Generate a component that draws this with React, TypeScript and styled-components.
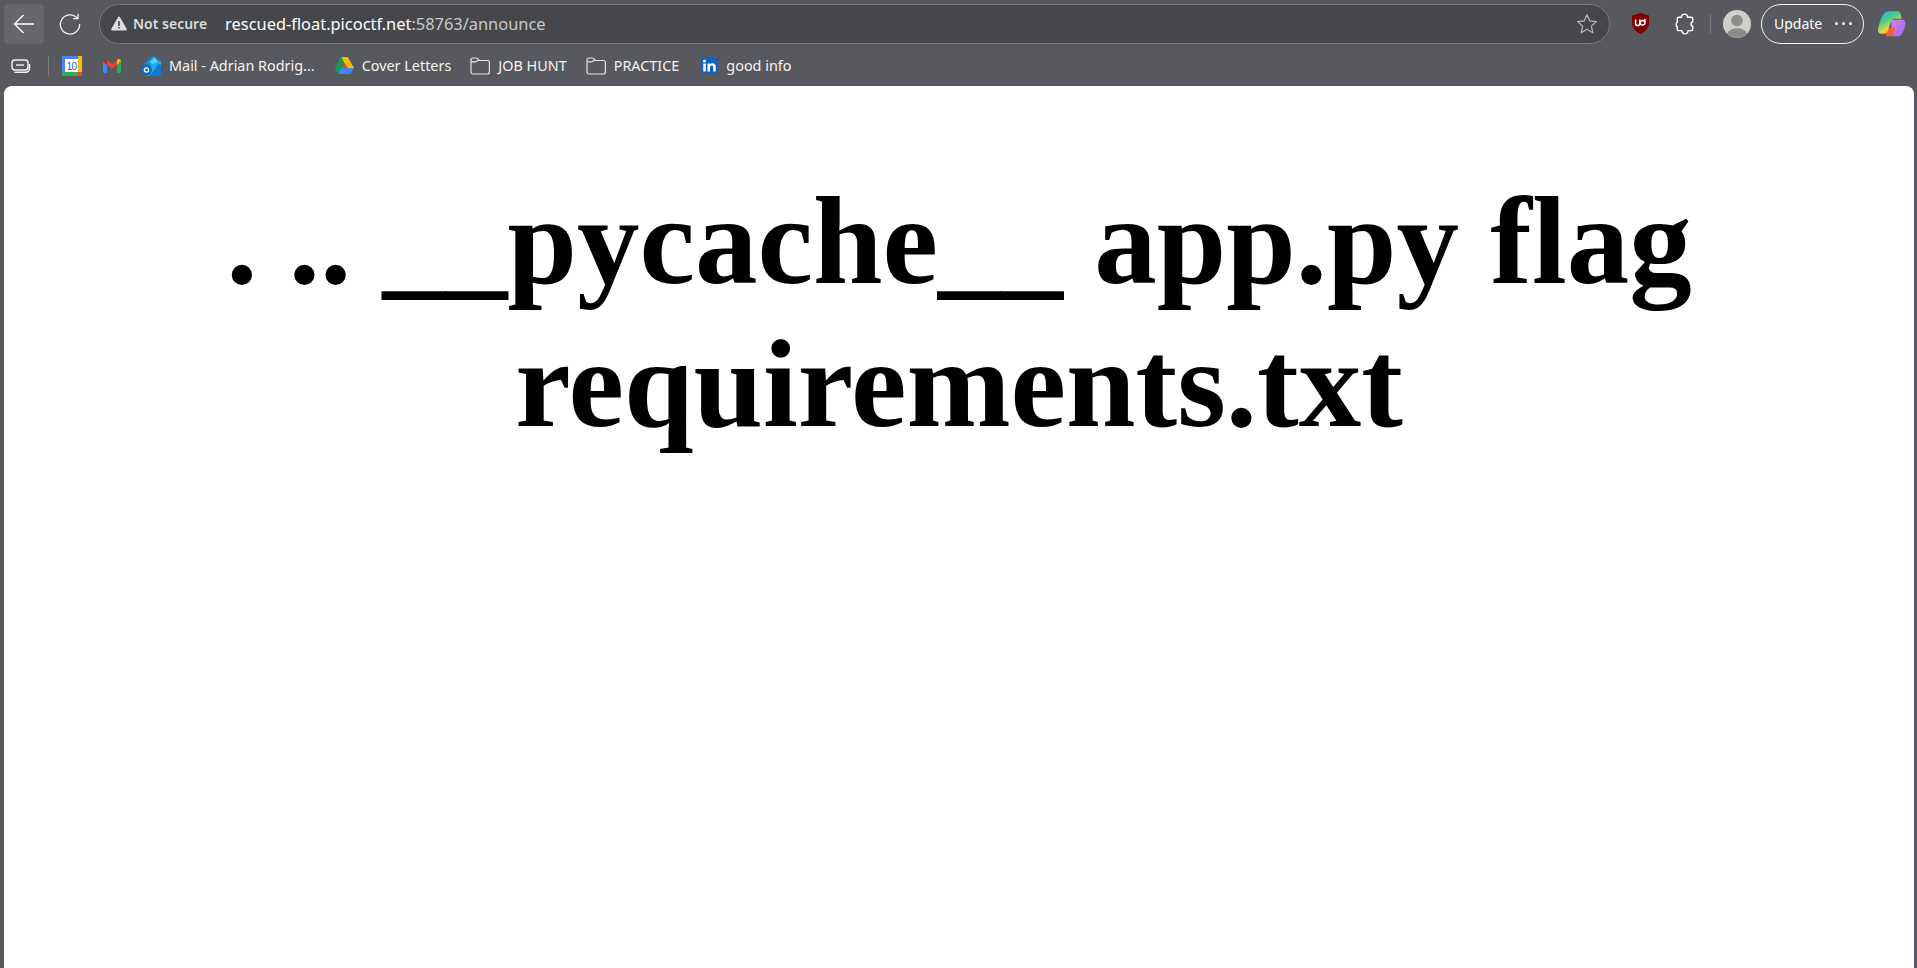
import React from "react";
import styled, { createGlobalStyle } from "styled-components";

const GlobalStyle = createGlobalStyle`
  html, body {
    margin: 0;
    height: 100%;
    background: #58595e;
    overflow: hidden;
  }
  #root {
    height: 100%;
  }
`;

const Browser = styled.div`
  display: flex;
  flex-direction: column;
  height: 968px;
  background: #58595e;
  color: #fff;
  font-family: "Noto Sans", "Open Sans", sans-serif;
`;

const Toolbar = styled.div`
  display: flex;
  align-items: center;
  height: 47px;
  padding: 0 8px 0 4px;
  box-sizing: border-box;
`;

const BackButton = styled.div`
  display: flex;
  align-items: center;
  justify-content: center;
  width: 40px;
  height: 40px;
  border-radius: 5px;
  background: #66676b;
`;

const ReloadButton = styled.div`
  display: flex;
  align-items: center;
  justify-content: center;
  width: 32px;
  height: 40px;
  margin: 0 13px 0 10px;
`;

const Omnibox = styled.div`
  flex: none;
  display: flex;
  align-items: center;
  width: 1511px;
  height: 40px;
  box-sizing: border-box;
  padding: 0 11px 0 11px;
  border: 1px solid #77787c;
  border-radius: 20px;
  background: #46474b;
`;

const SecurityChip = styled.span`
  display: flex;
  align-items: center;
  gap: 6px;
  font-size: 14px;
  font-weight: 600;
  color: #dcdcdd;
  margin-right: 18px;
`;

const Url = styled.span`
  flex: 1;
  font-size: 16.4px;
  color: #c9c9cb;
  b {
    font-weight: 400;
    color: #fff;
  }
`;

const ToolIcon = styled.div<{ $left: number; $size?: number }>`
  flex: none;
  display: flex;
  align-items: center;
  justify-content: center;
  width: ${({ $size }) => $size ?? 24}px;
  height: ${({ $size }) => $size ?? 24}px;
  margin-left: ${({ $left }) => $left}px;
`;

const Divider = styled.div<{ $left: number; $height: number }>`
  flex: none;
  width: 1px;
  height: ${({ $height }) => $height}px;
  margin-left: ${({ $left }) => $left}px;
  background: #7b7c80;
`;

const UpdatePill = styled.div`
  flex: none;
  display: flex;
  align-items: center;
  justify-content: space-between;
  width: 103px;
  height: 40px;
  margin-left: 10px;
  padding: 0 11px 0 12px;
  box-sizing: border-box;
  border: 1.5px solid #f2f2f2;
  border-radius: 20px;
  font-size: 14px;
`;

const Dots = styled.span`
  display: flex;
  gap: 4px;
  i {
    width: 3px;
    height: 3px;
    border-radius: 50%;
    background: #fff;
  }
`;

const BookmarksBar = styled.div`
  display: flex;
  align-items: center;
  height: 39px;
  padding: 0 0 2px 11px;
  box-sizing: border-box;
`;

const Bookmark = styled.div<{ $left: number }>`
  display: flex;
  align-items: center;
  gap: 8px;
  margin-left: ${({ $left }) => $left}px;
  font-size: 14.4px;
  white-space: nowrap;
  color: #f4f4f4;
`;

const Viewport = styled.main`
  flex: 1;
  margin: 0 3px 0 4px;
  background: #fff;
  border-radius: 8px 8px 0 0;
  overflow: hidden;
`;

const Heading = styled.h1`
  margin: 84px 0 0;
  padding: 0 8px;
  font-family: "Liberation Serif", "Times New Roman", serif;
  font-size: 125px;
  font-weight: 700;
  line-height: normal;
  text-align: center;
  color: #000;
`;

const ArrowBack = () => (
  <svg width="22" height="22" viewBox="0 0 22 22" fill="none" stroke="#fff" strokeWidth="1.3">
    <path d="M21 11H1.5M10.5 2 1.5 11l9 9" />
  </svg>
);

const Reload = () => (
  <svg width="22" height="22" viewBox="0 0 22 22" fill="none" stroke="#f2f2f2" strokeWidth="1.3">
    <path d="M18.3 5.2A9.6 9.6 0 1 0 20.6 11M19 .8v4.8h-4.8" />
  </svg>
);

const Warning = () => (
  <svg width="16" height="15" viewBox="0 0 16 15" fill="#dcdcdd">
    <path fillRule="evenodd" d="M8 .5c.4 0 .7.2.9.6l6.8 12c.4.7-.1 1.4-.9 1.4H1.2c-.8 0-1.3-.7-.9-1.4l6.8-12c.2-.4.5-.6.9-.6ZM7.2 5v5h1.6V5ZM7.2 11v1.600h1.600V11Z" />
  </svg>
);

const Star = () => (
  <svg width="22" height="22" viewBox="0 0 22 22" fill="none" stroke="#b9b9bb" strokeWidth="1.2" strokeLinejoin="round">
    <path d="m11 1.800 2.800 6.100 6.600.7-5 4.500 1.400 6.600-5.800-3.400-5.800 3.400 1.400-6.600-5-4.500 6.600-.7Z" />
  </svg>
);

const UBlock = () => (
  <svg width="19" height="21" viewBox="0 0 19 21">
    <path d="M9.500 0 18 2.500V10c0 5-3.800 8.500-8.500 11C4.800 18.500 1 15 1 10V2.500Z" fill="#800000" />
    <path d="M4.600 6.500v4a2.100 2.100 0 0 0 4.200 0v-4" fill="none" stroke="#fff" strokeWidth="1.500" />
    <circle cx="11.600" cy="9.800" r="2.300" fill="none" stroke="#fff" strokeWidth="1.500" />
    <path d="M13.900 5.800v4" fill="none" stroke="#fff" strokeWidth="1.500" />
  </svg>
);

const Puzzle = () => (
  <svg width="20" height="22" viewBox="0 0 18 20" fill="none" stroke="#fff" strokeWidth="1.300" strokeLinejoin="round">
    <path d="M8.500 1c1.800 0 2.800 1.200 2.800 2.800h3.400c.8 0 1.300.5 1.300 1.300v3c-1.100 0-1.500.9-1.500 1.900s.6 1.900 1.500 1.900v2.800c0 .8-.5 1.300-1.300 1.300h-2.900c0 1.300-1 3-2.800 3s-2.800-1.700-2.800-3H3.300c-.8 0-1.300-.5-1.300-1.300v-2.400C.9 12.300 1 11.200 1 10.300S1 8.500 2 8.300V5.100c0-.8.500-1.300 1.300-1.300h2.400C5.700 2.200 6.700 1 8.500 1Z" />
  </svg>
);

const Avatar = () => (
  <svg width="28" height="28" viewBox="0 0 28 28">
    <circle cx="14" cy="14" r="14" fill="#d0cfca" />
    <circle cx="14" cy="10.500" r="5.800" fill="#8e8c88" />
    <path d="M3.800 23.500C6 20 9.500 18.300 14 18.300s8 1.700 10.200 5.200A14 14 0 0 1 3.800 23.500Z" fill="#8e8c88" />
  </svg>
);

const Copilot = () => (
  <svg width="30" height="30" viewBox="0 0 28 28">
    <defs>
      <linearGradient id="copilotLeft" x1="0" y1="0" x2="0.6" y2="1">
        <stop offset="0" stopColor="#2aa7f0" />
        <stop offset="0.45" stopColor="#45d08a" />
        <stop offset="0.75" stopColor="#f5d33c" />
        <stop offset="1" stopColor="#f5a02c" />
      </linearGradient>
      <linearGradient id="copilotRight" x1="0" y1="0" x2="1" y2="1">
        <stop offset="0" stopColor="#d77ff0" />
        <stop offset="1" stopColor="#9a6af0" />
      </linearGradient>
    </defs>
    <path d="M13 10h10c3 0 4 2 3.500 4.500-.8 4-1.800 6.500-3.500 9-1 1.500-2.500 2-4 2h-5Z" fill="url(#copilotRight)" />
    <path d="M15 25.500H8l3-8h6l-1 5c-.200 1.500-.500 3-1 3Z" fill="#f0603a" />
    <path d="M11 2h8c1.500 0 2.500.800 3 2.500L23 9h-7c-1.500 0-2.500 1-3 2.500L10 21c-.5 1.500-1.500 2-3 2H4c-2.500 0-3.500-2-3-4.500 1-5 2.500-9.500 5-13.500C7.500 3 9 2 11 2Z" fill="url(#copilotLeft)" />
  </svg>
);

const TabGroups = () => (
  <svg width="20" height="16" viewBox="0 0 20 16" fill="none" stroke="#f2f2f2" strokeWidth="1.400">
    <rect x="1" y="2" width="16" height="10" rx="3" />
    <path d="M5 7h8" />
    <path d="M3.500 14.300h11c2.200 0 4-1.500 4-4V6" />
  </svg>
);

const Calendar = () => (
  <svg width="20" height="20" viewBox="0 0 20 20">
    <rect width="20" height="20" rx="1.500" fill="#fff" />
    <path d="M0 1.500A1.500 1.500 0 0 1 1.500 0H16v3H3v13H0Z" fill="#4285f4" />
    <rect x="16" y="0" width="4" height="16" fill="#fbbc04" />
    <path d="M3 16h13v4H1.500A1.500 1.500 0 0 1 0 18.500V16Z" fill="#34a853" />
    <rect x="16" y="16" width="4" height="4" fill="#ea4335" />
    <text x="9.500" y="13.500" textAnchor="middle" fontFamily="'Liberation Sans', sans-serif" fontSize="10" letterSpacing="-0.5" fill="#1a66d6">10</text>
  </svg>
);

const Gmail = () => (
  <svg width="18" height="14" viewBox="0 0 18 14">
    <path d="M0 2v10.500C0 13.300.7 14 1.500 14H4V6Z" fill="#4285f4" />
    <path d="M14 6v8h2.500c.8 0 1.500-.7 1.500-1.500V2Z" fill="#34a853" />
    <path d="M0 2c0-1.700 2-2.600 3.200-1.500L4 1.200V6Z" fill="#c5221f" />
    <path d="M4 6V1.200L9 5l5-3.800V6L9 9.800Z" fill="#ea4335" />
    <path d="M14 1.200 14.800.5C16 -.6 18 .3 18 2l-4 4Z" fill="#fbbc04" />
  </svg>
);

const Outlook = () => (
  <svg width="20" height="20" viewBox="0 0 20 20">
    <path d="M4 7 11.500.5c1-.8 2-.5 2.600.2L18 5l-8 7H4Z" fill="#1490df" />
    <path d="M13 1.500 17.500 5.500 12 9 9 6Z" fill="#50d9ff" />
    <path d="M9 9.500 17.800 5c1.200-.5 2.200.3 2.200 1.500V17a3 3 0 0 1-3 3H6l-1-5Z" fill="#28a8ea" />
    <path d="M17 8.500c1.500-.5 3 0 3 1.500v7a3 3 0 0 1-3 3H9Z" fill="#0f78d4" />
    <circle cx="5.500" cy="14" r="5.500" fill="#0f6cbd" />
    <circle cx="5.500" cy="14" r="2.100" fill="none" stroke="#fff" strokeWidth="1.400" />
  </svg>
);

const Drive = () => (
  <svg width="19" height="17" viewBox="0 0 19 17">
    <path d="M6.300 0h6.400L19 11h-6.300L9.500 6.500Z" fill="#fbbc04" />
    <path d="M6.300 0 0 11l3.200 6 6.300-10.500Z" fill="#0f9d58" />
    <path d="M6.300 11H19l-3.200 6H3.200Z" fill="#4285f4" />
    <path d="M6.300 11 9.500 6.500 12.700 11Z" fill="#ea4335" />
  </svg>
);

const Folder = () => (
  <svg width="20" height="18" viewBox="0 0 20 18" fill="none" stroke="#e4e4e5" strokeWidth="1.200">
    <path d="M1 3c0-1.200.8-2 2-2h3.500c1 0 1.500.8 2 1.600.3.500.6.900 1.500.900h7.500c1 0 1.900.8 1.900 1.900V15c0 1.200-.8 2-2 2H3c-1.200 0-2-.8-2-2Z" />
    <path d="M1 4.800h4.500c1.200 0 2-.6 3-2.200" />
  </svg>
);

const LinkedIn = () => (
  <svg width="17" height="17" viewBox="0 0 17 17">
    <rect width="17" height="17" fill="#0a66c2" />
    <rect x="2.300" y="6.500" width="2.500" height="8" fill="#fff" />
    <circle cx="3.500" cy="3.900" r="1.500" fill="#fff" />
    <path d="M6.500 6.500h2.400v1.100c.5-.8 1.400-1.300 2.600-1.300 2.300 0 3.200 1.400 3.200 3.600v4.600h-2.500v-4.200c0-1.100-.4-1.800-1.400-1.800S9 9.300 9 10.400v4.100H6.500Z" fill="#fff" />
  </svg>
);

export default function App() {
  return (
    <Browser>
      <GlobalStyle />
      <Toolbar>
        <BackButton>
          <ArrowBack />
        </BackButton>
        <ReloadButton>
          <Reload />
        </ReloadButton>
        <Omnibox>
          <SecurityChip>
            <Warning />
            Not secure
          </SecurityChip>
          <Url>
            <b>rescued-float.picoctf.net</b>:58763/announce
          </Url>
          <Star />
        </Omnibox>
        <ToolIcon $left={18}>
          <UBlock />
        </ToolIcon>
        <ToolIcon $left={21}>
          <Puzzle />
        </ToolIcon>
        <Divider $left={13} $height={20} />
        <ToolIcon $left={12} $size={28}>
          <Avatar />
        </ToolIcon>
        <UpdatePill>
          Update
          <Dots>
            <i />
            <i />
            <i />
          </Dots>
        </UpdatePill>
        <ToolIcon $left={13} $size={30}>
          <Copilot />
        </ToolIcon>
      </Toolbar>
      <BookmarksBar>
        <TabGroups />
        <Divider $left={17} $height={20} />
        <Bookmark $left={13}>
          <Calendar />
        </Bookmark>
        <Bookmark $left={21}>
          <Gmail />
        </Bookmark>
        <Bookmark $left={20}>
          <Outlook />
          Mail - Adrian Rodrig...
        </Bookmark>
        <Bookmark $left={20}>
          <Drive />
          Cover Letters
        </Bookmark>
        <Bookmark $left={19}>
          <Folder />
          JOB HUNT
        </Bookmark>
        <Bookmark $left={19}>
          <Folder />
          PRACTICE
        </Bookmark>
        <Bookmark $left={22}>
          <LinkedIn />
          good info
        </Bookmark>
      </BookmarksBar>
      <Viewport>
        <Heading>. .. __pycache__ app.py flag requirements.txt</Heading>
      </Viewport>
    </Browser>
  );
}
